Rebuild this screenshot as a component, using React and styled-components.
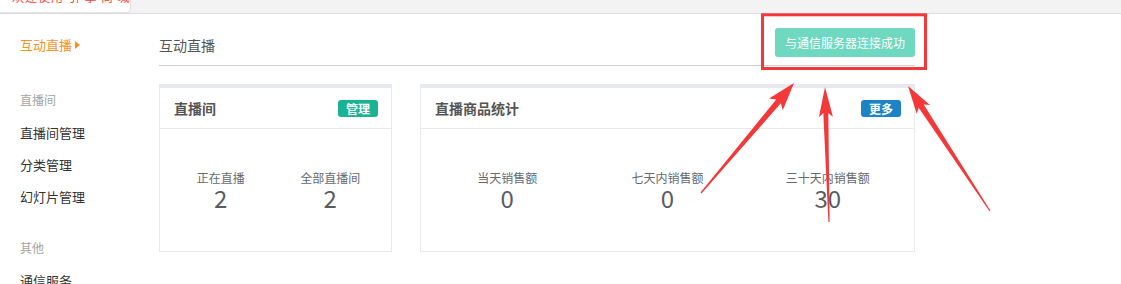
import React from "react";
import styled, { createGlobalStyle } from "styled-components";

const Global = createGlobalStyle`
  body {
    margin: 0;
    background: #fff;
    font-family: "Noto Sans CJK SC", "Noto Sans", sans-serif;
    color: #333;
  }
`;

const Page = styled.div`
  position: relative;
  width: 1121px;
  height: 284px;
  overflow: hidden;
`;

const TopBar = styled.div`
  height: 13px;
  background: #f3f3f4;
  border-bottom: 1px solid #dcdcdc;
  overflow: hidden;
`;

const Tab = styled.div`
  width: 118px;
  height: 12px;
  padding-left: 12px;
  background: #fff;
  border-right: 1px solid #e2e2e2;
  border-bottom: 1px solid #e2e2e2;
  border-bottom-right-radius: 4px;
  overflow: hidden;
`;

const TabText = styled.span`
  display: block;
  margin-top: -9px;
  font-size: 12px;
  line-height: 12px;
  color: #f5413c;
  white-space: nowrap;
  letter-spacing: 1px;
`;

const Body = styled.div`
  display: flex;
`;

const Sidebar = styled.nav`
  width: 139px;
  padding: 21px 0 0 20px;
`;

const Active = styled.div`
  display: flex;
  align-items: center;
  gap: 3px;
  font-size: 13px;
  line-height: 20px;
  color: #f7921e;
`;

const Caret = styled.span`
  width: 0;
  height: 0;
  border-top: 4px solid transparent;
  border-bottom: 4px solid transparent;
  border-left: 5px solid #f7921e;
`;

const GroupTitle = styled.div`
  margin-top: ${(p) => p.$top}px;
  margin-bottom: 7px;
  font-size: 12px;
  line-height: 20px;
  color: #a3a3a3;
`;

const NavItem = styled.div`
  font-size: 13px;
  line-height: 32px;
  color: #333;
`;

const Main = styled.main`
  width: 756px;
`;

const Header = styled.div`
  display: flex;
  align-items: center;
  justify-content: space-between;
  padding: 14px 0 8px;
  border-bottom: 1px solid #cfcfcf;
`;

const Title = styled.h2`
  margin: 0;
  padding-top: 5px;
  font-size: 14px;
  font-weight: normal;
  line-height: 20px;
  color: #555;
`;

const StatusButton = styled.button`
  width: 140px;
  height: 29px;
  border: none;
  border-radius: 3px;
  background: #6ed8c0;
  color: #fff;
  font-family: inherit;
  font-size: 12px;
  padding: 0;
`;

const Cards = styled.div`
  display: flex;
  gap: 28px;
  margin-top: 18px;
`;

const Card = styled.section`
  width: ${(p) => p.$width}px;
  box-sizing: border-box;
  border: 1px solid #e7eaec;
  border-top: 4px solid #e7eaec;
  background: #fff;
`;

const CardHead = styled.div`
  height: 40px;
  display: flex;
  align-items: center;
  justify-content: space-between;
  padding: 0 13px 0 14px;
  border-bottom: 1px solid #e7eaec;
`;

const CardTitle = styled.h3`
  margin: 0;
  font-size: 14px;
  font-weight: bold;
  color: #555;
`;

const Badge = styled.span`
  width: 40px;
  height: 17px;
  border-radius: 3px;
  background: ${(p) => p.$color};
  color: #fff;
  font-size: 12px;
  font-weight: bold;
  line-height: 17px;
  text-align: center;
`;

const Stats = styled.div`
  display: grid;
  grid-template-columns: repeat(${(p) => p.$cols}, 1fr);
  padding: 41px 6px 41px;
`;

const Stat = styled.div`
  text-align: center;
`;

const StatLabel = styled.div`
  font-size: 12px;
  line-height: 16px;
  color: #676a6c;
`;

const StatValue = styled.div`
  font-size: 24px;
  line-height: 24px;
  color: #5a5d60;
`;

const Overlay = styled.svg`
  position: absolute;
  top: 0;
  left: 0;
  pointer-events: none;
`;

function arrowPoints(tail, tip, headLen, headHalf, shaftHalf) {
  const dx = tip[0] - tail[0];
  const dy = tip[1] - tail[1];
  const len = Math.hypot(dx, dy);
  const ux = dx / len;
  const uy = dy / len;
  const nx = -uy;
  const ny = ux;
  const bx = tip[0] - ux * headLen;
  const by = tip[1] - uy * headLen;
  const wx = bx - ux * 4;
  const wy = by - uy * 4;
  const pts = [
    [tail[0] + nx * 0.6, tail[1] + ny * 0.6],
    [bx + nx * shaftHalf, by + ny * shaftHalf],
    [wx + nx * headHalf, wy + ny * headHalf],
    tip,
    [wx - nx * headHalf, wy - ny * headHalf],
    [bx - nx * shaftHalf, by - ny * shaftHalf],
    [tail[0] - nx * 0.6, tail[1] - ny * 0.6],
  ];
  return pts.map((p) => p.map((v) => v.toFixed(1)).join(",")).join(" ");
}

const arrows = [
  { tail: [701, 193], tip: [794, 83], head: 24, half: 9, shaft: 3 },
  { tail: [829, 222], tip: [825, 87], head: 26, half: 7, shaft: 2.5 },
  { tail: [990, 211], tip: [908, 86], head: 24, half: 8, shaft: 3 },
];

const roomStats = [
  { label: "正在直播", value: 2 },
  { label: "全部直播间", value: 2 },
];

const salesStats = [
  { label: "当天销售额", value: 0 },
  { label: "七天内销售额", value: 0 },
  { label: "三十天内销售额", value: 30 },
];

const StatGrid = ({ items }) => (
  <Stats $cols={items.length}>
    {items.map((s) => (
      <Stat key={s.label}>
        <StatLabel>{s.label}</StatLabel>
        <StatValue>{s.value}</StatValue>
      </Stat>
    ))}
  </Stats>
);

export default function App() {
  return (
    <Page>
      <Global />
      <TopBar>
        <Tab>
          <TabText>欢迎使用 引 擎 商 城 后 台</TabText>
        </Tab>
      </TopBar>
      <Body>
        <Sidebar>
          <Active>
            互动直播
            <Caret />
          </Active>
          <GroupTitle $top={35}>直播间</GroupTitle>
          <NavItem>直播间管理</NavItem>
          <NavItem>分类管理</NavItem>
          <NavItem>幻灯片管理</NavItem>
          <GroupTitle $top={25}>其他</GroupTitle>
          <NavItem>通信服务</NavItem>
        </Sidebar>
        <Main>
          <Header>
            <Title>互动直播</Title>
            <StatusButton>与通信服务器连接成功</StatusButton>
          </Header>
          <Cards>
            <Card $width={233}>
              <CardHead>
                <CardTitle>直播间</CardTitle>
                <Badge $color="#1ab394">管理</Badge>
              </CardHead>
              <StatGrid items={roomStats} />
            </Card>
            <Card $width={495}>
              <CardHead>
                <CardTitle>直播商品统计</CardTitle>
                <Badge $color="#1c84c6">更多</Badge>
              </CardHead>
              <StatGrid items={salesStats} />
            </Card>
          </Cards>
        </Main>
      </Body>
      <Overlay width="1121" height="284" viewBox="0 0 1121 284">
        <rect x="762.5" y="14.8" width="163" height="53.7" fill="none" stroke="#f4383a" strokeWidth="3" />
        {arrows.map((a, i) => (
          <polygon key={i} points={arrowPoints(a.tail, a.tip, a.head, a.half, a.shaft)} fill="#f4383a" />
        ))}
      </Overlay>
    </Page>
  );
}
